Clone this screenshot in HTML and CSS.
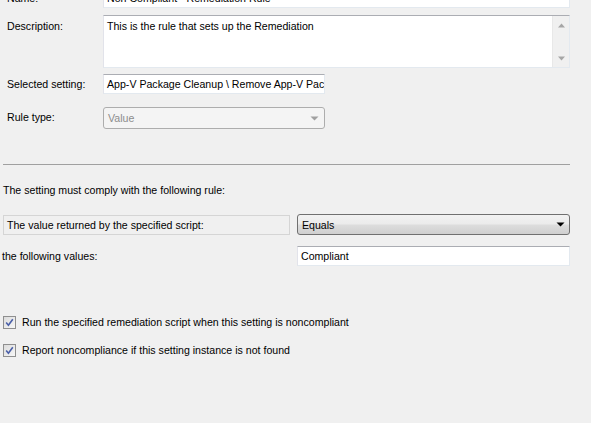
FILE: index.html
```html
<!DOCTYPE html>
<html>
<head>
<meta charset="utf-8">
<link rel="stylesheet" href="styles.css">
</head>
<body>
<div class="page">
  <div class="form">
    <div class="row row-name">
      <div class="label">Name:</div>
      <div class="field text">Non Compliant - Remediation Rule</div>
    </div>
    <div class="row row-desc">
      <div class="label">Description:</div>
      <div class="field area">
        <div class="area-text">This is the rule that sets up the Remediation</div>
        <div class="scroll">
          <svg width="9" height="5" viewBox="0 0 9 5"><path d="M4.5 0.5 L8 4.5 L1 4.5 Z" fill="#a6a6a6"/></svg>
          <svg width="9" height="5" viewBox="0 0 9 5"><path d="M1 0.5 L8 0.5 L4.5 4.5 Z" fill="#a6a6a6"/></svg>
        </div>
      </div>
    </div>
    <div class="row row-sel">
      <div class="label">Selected setting:</div>
      <div class="field text short clip">App-V Package Cleanup \ Remove App-V Package</div>
    </div>
    <div class="row row-type">
      <div class="label">Rule type:</div>
      <div class="field combo-dis short">
        <span>Value</span>
        <svg width="9" height="5" viewBox="0 0 9 5"><path d="M0.5 0.5 L8.5 0.5 L4.5 4.5 Z" fill="#a0a0a0"/></svg>
      </div>
    </div>
  </div>

  <div class="sep"></div>

  <div class="rule-title">The setting must comply with the following rule:</div>

  <div class="rule-grid">
    <div class="ro-box">The value returned by the specified script:</div>
    <div class="combo">
      <span>Equals</span>
      <svg width="9" height="5" viewBox="0 0 9 5"><path d="M0.5 0.5 L8.5 0.5 L4.5 4.5 Z" fill="#000"/></svg>
    </div>
    <div class="plain-label">the following values:</div>
    <div class="field text">Compliant</div>
  </div>

  <div class="checks">
    <label class="check">
      <span class="box"><svg width="9" height="9" viewBox="0 0 9 9"><path d="M1.2 4.6 L3.4 7.2 L7.8 1.2" fill="none" stroke="#4a5fa8" stroke-width="1.6"/></svg></span>
      <span>Run the specified remediation script when this setting is noncompliant</span>
    </label>
    <label class="check">
      <span class="box"><svg width="9" height="9" viewBox="0 0 9 9"><path d="M1.2 4.6 L3.4 7.2 L7.8 1.2" fill="none" stroke="#4a5fa8" stroke-width="1.6"/></svg></span>
      <span>Report noncompliance if this setting instance is not found</span>
    </label>
  </div>
</div>
</body>
</html>
```

FILE: styles.css
```css
html, body {
  margin: 0;
  padding: 0;
  background: #f0f0f0;
  height: 100%;
  overflow: hidden;
}

.page {
  font-family: "Liberation Sans", Arial, sans-serif;
  font-size: 10.6px;
  color: #000;
  width: 591px;
}

.form {
  margin-top: -12px;
  padding: 0 21px 0 7px;
  display: flex;
  flex-direction: column;
}

.row {
  display: grid;
  grid-template-columns: 96px 1fr;
  align-items: start;
}

.label {
  line-height: 20px;
}

.row-name { height: 27px; }
.row-desc { height: 59px; }
.row-sel { height: 33px; }
.row-type { height: 22px; }

.row-desc .label { line-height: 18px; padding-top: 2px; }

.field {
  box-sizing: border-box;
  background: #fff;
  border: 1px solid #abadb3;
  border-color: #abadb3 #e3e9ef #e3e9ef #e2e3ea;
}

.text {
  height: 20px;
  line-height: 18px;
  padding: 0 3px;
  white-space: nowrap;
  overflow: hidden;
}

.short { width: 222px; }

.clip { text-overflow: clip; }

.area {
  height: 53px;
  display: flex;
  justify-content: space-between;
}

.area-text {
  padding: 2px 3px;
  line-height: 16px;
}

.scroll {
  width: 16px;
  background: #f0f0f0;
  border-left: 1px solid #e8e8e8;
  display: flex;
  flex-direction: column;
  justify-content: space-between;
  align-items: center;
  padding: 7px 0 6px;
}

.scroll svg { display: block; }

.combo-dis {
  height: 22px;
  border: 1px solid #adadad;
  border-radius: 3px;
  background: #f4f4f4;
  color: #8d8d8d;
  display: flex;
  align-items: center;
  justify-content: space-between;
  padding: 0 5px 0 4px;
}

.sep {
  margin: 35px 21px 0 3px;
  height: 1px;
  background: #a0a0a0;
}

.rule-title {
  margin: 18px 0 0 3px;
  line-height: 14px;
}

.rule-grid {
  margin: 17px 21px 0 3px;
  display: grid;
  grid-template-columns: 287px 1fr;
  column-gap: 7px;
  row-gap: 11px;
  align-items: center;
}

.ro-box {
  box-sizing: border-box;
  height: 20px;
  border: 1px solid #d5d5d5;
  background: #f0f0f0;
  line-height: 18px;
  padding: 0 3px;
}

.combo {
  box-sizing: border-box;
  height: 21px;
  border: 1px solid #707070;
  border-radius: 3px;
  background: linear-gradient(#f2f2f2 0%, #ebebeb 48%, #dddddd 52%, #cfcfcf 100%);
  display: flex;
  align-items: center;
  justify-content: space-between;
  padding: 0 4px 0 4px;
}

.plain-label {
  margin-left: -1px;
  line-height: 20px;
}

.checks {
  margin: 49px 0 0 3px;
  display: flex;
  flex-direction: column;
  gap: 14px;
}

.check {
  display: flex;
  align-items: center;
  gap: 6px;
  height: 14px;
}

.box {
  box-sizing: border-box;
  width: 13px;
  height: 13px;
  border: 1px solid #8f8f8f;
  background: linear-gradient(135deg, #dcdcdc, #f7f7f7);
  display: flex;
  align-items: center;
  justify-content: center;
}

.box svg { display: block; }
```
